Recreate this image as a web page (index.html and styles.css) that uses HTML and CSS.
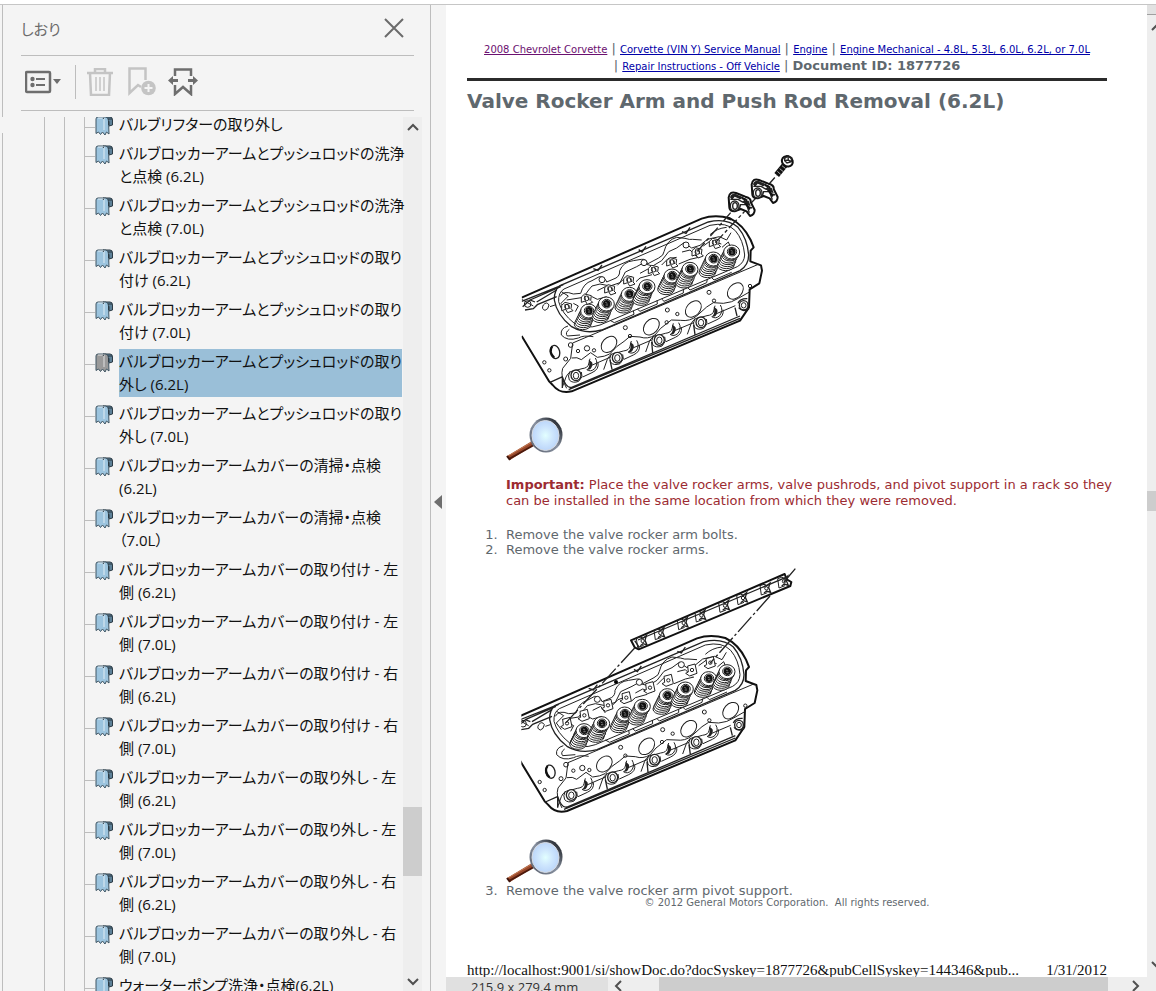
FILE: index.html
```
<!DOCTYPE html>
<html lang="ja">
<head>
    <meta charset="UTF-8">
    <meta name="viewport" content="width=device-width, initial-scale=1.0">
    <title>Valve Rocker Arm and Push Rod Removal (6.2L)</title>
    <link rel="stylesheet" href="styles.css">
</head>
<body>
    <svg class="sprite" aria-hidden="true">
        <defs>
            <radialGradient id="lens-fill">
                <stop offset="0" stop-color="#e2ffff"/>
                <stop offset="0.5" stop-color="#cfe7fd"/>
                <stop offset="1" stop-color="#bcd6fa"/>
            </radialGradient>
            <linearGradient id="ring-fill" x1="0" y1="1" x2="1" y2="0">
                <stop offset="0" stop-color="#555b68"/>
                <stop offset="0.5" stop-color="#8a93a3"/>
                <stop offset="1" stop-color="#05070a"/>
            </linearGradient>
            <clipPath id="head-clip"><rect x="35" y="0" width="865" height="780"/></clipPath>
            <clipPath id="head-clip-shifted"><rect x="48" y="0" width="865" height="790"/></clipPath>
        </defs>

        <symbol id="bookmark" viewBox="0 0 18 20">
            <path d="M8 1 H15 Q17.500 1 17.500 4 V9 L14 10 V6 L13 3 Z" class="bm-back"/>
            <path d="M1 3 Q1 1 3 1 H11 Q13.500 2 13.500 5 L14 18 L11.500 16 L10 19 L7.500 16 L5.500 18.500 L3.500 16 L1 17.500 Z" class="bm-front"/>
            <path d="M9 3 V14 M3 2 H10" class="bm-shine"/>
            <path d="M9 1.500 L8 3 M13.500 5 V9 M13 3 H17" class="bm-line"/>
        </symbol>

        <symbol id="magnifier" viewBox="0 0 58 45">
            <path d="M1 40 L26 25 L28 29 L4 44 Z" fill="#98482b"/>
            <path d="M3 43 L28 29" stroke="#4d1a0c" stroke-width="2"/>
            <path d="M2 40 L26 26" stroke="#c47b55" stroke-width="1"/>
            <path d="M1 40 L4 44" stroke="#3f140a" stroke-width="2"/>
            <ellipse cx="40" cy="19" rx="16.500" ry="17.500" fill="url(#ring-fill)"/>
            <ellipse cx="39.500" cy="19.500" rx="13.500" ry="15" fill="url(#lens-fill)" stroke="#d7dce3" stroke-width="1"/>
        </symbol>

        <symbol id="spring" viewBox="-50 -30 80 100" overflow="visible">
            <g class="coil">
                <ellipse cx="-18" cy="40" rx="25" ry="16"/>
                <ellipse cx="-16" cy="34" rx="25" ry="16"/>
                <ellipse cx="-13" cy="28" rx="25" ry="16"/>
                <ellipse cx="-11" cy="22" rx="24" ry="16"/>
                <ellipse cx="-8" cy="16" rx="24" ry="17"/>
                <ellipse cx="-5" cy="10" rx="24" ry="17"/>
                <ellipse cx="-2" cy="5" rx="24" ry="19"/>
                <ellipse cx="0" cy="0" rx="24" ry="21"/>
                <ellipse cx="1" cy="-1" rx="14" ry="13"/>
            </g>
            <ellipse cx="1" cy="-1" rx="11" ry="11" fill="#111"/>
            <path d="M-3 -5 L3 -2 M-2 3 L5 3" stroke="#aaa" stroke-width="2"/>
        </symbol>

        <symbol id="port" viewBox="-50 -50 120 100" overflow="visible">
            <path class="thin" d="M-41 36 L-30 5 Q-22 -14 0 -15 L18 -20 Q36 -22 38 -34 L42 -50"/>
            <path class="thin" d="M-18 -12 Q-26 3 -20 14 Q-10 25 8 18 L18 4 L16 -10 M20 5 L48 -8 Q70 -18 66 -38"/>
            <path class="dark" d="M38 -46 Q54 -40 48 -27 Q44 -14 32 -17 Q44 -25 38 -46 Z"/>
            <path class="thin" d="M32 -17 Q44 -9 56 -20 Q68 -36 58 -52"/>
            <ellipse class="mid solid" cx="0" cy="0" rx="15" ry="16"/>
            <ellipse class="thin solid" cx="0" cy="1" rx="8" ry="10"/>
        </symbol>

        <symbol id="head" viewBox="0 0 900 780" overflow="visible">
            <path class="outline" d="M35 473 L575 236 Q615 222 660 235 Q700 254 722 300 L731 322 L722 332 L721 364 L753 376 L756 392 L748 430 L719 448 L717 502 L690 542 L185 754 Q150 763 128 735 L118 725 L35 588"/>
            <path class="mid" d="M35 484 L160 434 M60 480 L152 440 M80 486 L140 450 M38 500 L60 480 L75 486 M45 510 L70 506 L82 494 L140 470 M250 386 L264 391 L276 375 M386 329 L396 336 L408 319 M516 275 L528 280 L540 262"/>
            <path class="thin" d="M35 478 L70 498 M100 495 q10 -12 17 0 q-2 14 -12 16 q-12 -4 -5 -16 M120 500 L135 495"/>
            <circle class="thin" cx="53" cy="492" r="10"/>
            <!-- valve cover rail -->
            <path class="mid" d="M150 437 L595 246 Q650 233 684 262 Q712 295 716 345 Q716 375 690 392 L275 570 Q225 584 185 560 Q140 525 133 480 Q132 450 150 437 Z"/>
            <path class="thin" d="M162 447 L600 256 Q650 245 676 272 Q700 300 704 345 Q703 368 682 380 L270 555 Q225 570 193 550 Q155 520 146 485 Q144 458 162 447 Z"/>
            <path class="thin" d="M300 541 L313 548 L372 523 L370 512 M382 507 L390 514 L442 492 L441 481 M455 477 L462 484 L520 459 L520 448 M533 443 L540 450 L590 428 L592 417 M605 413 L612 420 L665 397"/>
            <path class="thin" d="M174 558 Q150 565 154 585 Q172 605 205 594 Q220 585 250 590 M178 568 Q164 578 172 588 L210 585 M188 609 L745 373 M188 609 L182 655 L158 685 Q150 710 170 745"/>
            <path class="thin" d="M185 654 Q202 650 214 659 L242 638 L262 652 Q285 650 299 642 L320 620 Q344 604 360 589 L390 591 Q413 599 435 585 L452 565 L484 540 L512 541 Q540 545 560 528 L590 501 L610 488 L640 490 Q666 488 685 475 L720 455"/>
            <path class="mid" d="M120 727 L158 710 M157 710 Q169 747 185 742 L690 528 M176 749 L690 535 M300 660 L306 688 M425 606 L428 638 M551 555 L555 584 M675 503 L681 528 M157 710 V744"/>
            <path class="thin" d="M240 678 L300 652 M366 625 L425 600 M491 573 L551 548 M617 522 L676 497"/>
            <g class="thin">
                <ellipse cx="297" cy="613" rx="20" ry="27" transform="rotate(42 297 613)"/>
                <ellipse cx="424" cy="560" rx="20" ry="28" transform="rotate(42 424 560)"/>
                <ellipse cx="550" cy="507" rx="20" ry="28" transform="rotate(42 550 507)"/>
                <ellipse cx="676" cy="453" rx="20" ry="28" transform="rotate(42 676 453)"/>
                <circle cx="182" cy="615" r="7"/>
                <circle cx="167" cy="657" r="6"/>
                <circle cx="103" cy="667" r="5"/>
                <circle cx="118" cy="691" r="5"/>
                <circle cx="204" cy="633" r="5"/>
                <circle cx="231" cy="625" r="8"/>
                <circle cx="252" cy="631" r="5"/>
                <circle cx="346" cy="563" r="6"/>
                <circle cx="360" cy="588" r="5"/>
                <circle cx="472" cy="510" r="6"/>
                <circle cx="470" cy="547" r="5"/>
                <circle cx="502" cy="522" r="5"/>
                <circle cx="597" cy="457" r="6"/>
                <circle cx="612" cy="482" r="5"/>
                <circle cx="720" cy="438" r="5"/>
            </g>
            <ellipse class="mid" cx="135" cy="636" rx="14" ry="20" transform="rotate(-15 135 636)"/>
            <path class="outline" d="M127 619 Q115 635 133 653"/>
            <use href="#port" x="148" y="656" width="120" height="100"/>
            <use href="#port" x="272" y="603" width="120" height="100"/>
            <use href="#port" x="398" y="550" width="120" height="100"/>
            <use href="#port" x="523" y="497" width="120" height="100"/>
            <path class="mid" d="M684 490 Q690 475 712 476 M686 503 Q698 518 717 506"/>
            <ellipse class="mid" cx="701" cy="496" rx="13" ry="14"/>
            <ellipse class="thin" cx="701" cy="496" rx="7" ry="8"/>
            <!-- intake side casting -->
            <path class="thin" d="M150 470 Q160 450 190 462 L212 460 Q220 430 246 422 L268 410 Q285 410 290 426 L318 414 Q330 407 329 392 Q340 365 370 362 L394 358 Q410 356 412 372 L446 354 Q462 346 462 335 Q470 300 500 292 L525 295 Q540 300 548 298 L575 300"/>
            <path class="thin" d="M170 480 L220 472 L236 450 L246 438 L270 432 L300 438 L330 428 L346 396 L380 380 L398 370 L428 378 L455 362 L476 335 L500 324 L522 308 L545 324 L570 316 L592 298 L628 290 L650 300 L663 278 M600 284 Q620 265 650 262"/>
            <path class="thin" d="M154 455 L175 468 L153 490 L168 510 M262 452 L286 440 L300 460 M322 436 L338 420 L366 410 M390 400 L412 388 L440 398 M455 375 L474 356 L500 352 M516 336 L540 330 L560 350 M580 318 L602 302 L634 312 M190 490 L205 498 L196 515 M246 470 L262 478 L290 470 M378 425 L390 414 L426 404 M506 372 L540 358 L566 352 M636 322 L655 306 L660 318"/>
            <g class="thin solid">
                <circle cx="276" cy="419" r="9"/>
                <circle cx="402" cy="368" r="9"/>
                <circle cx="528" cy="315" r="9"/>
            </g>
            <use href="#spring" x="186" y="483" width="80" height="100"/>
            <use href="#spring" x="239" y="462" width="80" height="100"/>
            <use href="#spring" x="308" y="433" width="80" height="100"/>
            <use href="#spring" x="361" y="410" width="80" height="100"/>
            <use href="#spring" x="436" y="378" width="80" height="100"/>
            <use href="#spring" x="490" y="358" width="80" height="100"/>
            <use href="#spring" x="560" y="327" width="80" height="100"/>
            <use href="#spring" x="615" y="306" width="80" height="100"/>
        </symbol>

        <symbol id="pedestal" viewBox="-20 -20 40 40" overflow="visible">
            <path class="thin solid" d="M-16 -4 L-6 -13 L14 -8 L12 6 L18 12 L2 18 L-4 8 L-16 12 Z"/>
            <circle class="thin" cx="0" cy="0" r="7"/>
            <path class="thin" d="M-6 -8 L-4 5 M3 -5 L8 6"/>
        </symbol>

        <symbol id="clamp" viewBox="-20 -20 40 40" overflow="visible">
            <path class="thin" d="M-18 -8 L-14 20 M-18 -8 L-6 -12 M-14 20 L4 13"/>
            <path class="mid" d="M-6 -12 L2 -8 L12 -16 L8 -2 L14 12 L2 8 L-6 14"/>
            <circle class="thin" cx="1" cy="0" r="5"/>
        </symbol>

        <symbol id="pad" viewBox="-20 -20 40 40" overflow="visible">
            <path class="thin solid" d="M-12 -14 L10 -20 L16 8 L-6 16 L-18 8 L-10 4 Z"/>
            <circle class="thin" cx="1" cy="-2" r="5"/>
        </symbol>

        <symbol id="rocker" viewBox="-40 -40 80 80" overflow="visible">
            <path class="outline solid" d="M-36 -18 Q-32 -38 -14 -31 L14 -20 Q32 -16 30 -4 L42 20 Q42 34 28 38 L18 24 L0 17 L-18 24 Q-34 24 -34 12 Z"/>
            <path class="dark" d="M-32 -18 Q-28 -32 -14 -27 L4 -20 L-2 -13 L-18 -20 L-26 -10 Z M4 -6 L24 -8 L30 8 L16 6 Z"/>
            <path class="mid" d="M-29 -20 Q-20 -30 -10 -22 L16 -12 M-31 -12 L-8 -12 L6 -4 L24 0 M-4 17 L0 4 L18 4 L26 28 M-12 -24 L-2 -14 L8 -20 M10 -10 L22 10 L34 14"/>
            <ellipse class="mid solid" cx="-18" cy="8" rx="13" ry="15"/>
            <ellipse class="mid" cx="-17" cy="8" rx="7" ry="10"/>
            <path class="outline" d="M4 -16 L20 -8 M14 0 L28 18"/>
        </symbol>
    </svg>

    <main class="window">
        <div class="rail"><div class="rail-top"></div><div class="rail-bottom"></div></div>

        <aside class="sidebar">
            <div class="sidebar-header">
                <h2>しおり</h2>
                <button type="button" class="icon-btn" aria-label="閉じる">
                    <svg width="20" height="20" viewBox="0 0 20 20"><path d="M1 1 L19 19 M19 1 L1 19" stroke="#6b6b6b" stroke-width="2" fill="none"/></svg>
                </button>
            </div>
            <div class="toolbar">
                <button type="button" class="icon-btn btn-options" aria-label="オプション">
                    <svg width="38" height="24" viewBox="0 0 38 24">
                        <rect x="1" y="2" width="24" height="20" rx="1" fill="none" stroke="#6e6e6e" stroke-width="2.500"/>
                        <circle cx="7.500" cy="9" r="2.200" fill="#6e6e6e"/><circle cx="7.500" cy="15" r="2.200" fill="#6e6e6e"/>
                        <path d="M11 9 H20 M11 15 H20" stroke="#6e6e6e" stroke-width="2"/>
                        <path d="M28 9 H36 L32 14 Z" fill="#6e6e6e"/>
                    </svg>
                </button>
                <span class="divider"></span>
                <button type="button" class="icon-btn btn-delete" aria-label="削除" disabled>
                    <svg width="26" height="28" viewBox="0 0 26 28" fill="none" stroke="#c4c4c4" stroke-width="2.500">
                        <path d="M0 5 H26 M8 5 V1 H18 V5 M3 5 L4 27 H22 L23 5"/>
                        <path d="M9 9 V23 M13 9 V23 M17 9 V23" stroke-width="1.500"/>
                    </svg>
                </button>
                <button type="button" class="icon-btn btn-add" aria-label="新規しおり" disabled>
                    <svg width="28" height="29" viewBox="0 0 28 29">
                        <path d="M13 20 L10 18 L1.500 26 V1.500 H17.500 V13" fill="none" stroke="#c4c4c4" stroke-width="2.500"/>
                        <circle cx="20.500" cy="21" r="7.300" fill="#c4c4c4"/>
                        <path d="M16.500 21 H24.500 M20.500 17 V25" stroke="#f4f4f4" stroke-width="2"/>
                    </svg>
                </button>
                <button type="button" class="icon-btn" aria-label="現在のしおりを表示">
                    <svg width="30" height="28" viewBox="0 0 30 28" fill="none" stroke="#6e6e6e" stroke-width="2.500">
                        <path d="M7 8 V1.500 H23 V8 M7 17 V26 L15 19 L23 26 V17"/>
                        <path d="M4 12.500 H10 M20 12.500 H26" stroke-width="3"/>
                        <path d="M0 12.500 L5 8 V17 Z M30 12.500 L25 8 V17 Z" fill="#6e6e6e" stroke="none"/>
                    </svg>
                </button>
            </div>

            <div class="tree-wrap">
                <nav class="tree">
                    <ul>
                        <li><svg class="bm"><use href="#bookmark"/></svg><a href="#">バルブリフターの取り外し</a></li>
                        <li><svg class="bm"><use href="#bookmark"/></svg><a href="#">バルブロッカーアームとプッシュロッドの洗浄<br>と点検 (6.2L)</a></li>
                        <li><svg class="bm"><use href="#bookmark"/></svg><a href="#">バルブロッカーアームとプッシュロッドの洗浄<br>と点検 (7.0L)</a></li>
                        <li><svg class="bm"><use href="#bookmark"/></svg><a href="#">バルブロッカーアームとプッシュロッドの取り<br>付け (6.2L)</a></li>
                        <li><svg class="bm"><use href="#bookmark"/></svg><a href="#">バルブロッカーアームとプッシュロッドの取り<br>付け (7.0L)</a></li>
                        <li class="selected"><svg class="bm"><use href="#bookmark"/></svg><a href="#" aria-current="true">バルブロッカーアームとプッシュロッドの取り<br>外し (6.2L)</a></li>
                        <li><svg class="bm"><use href="#bookmark"/></svg><a href="#">バルブロッカーアームとプッシュロッドの取り<br>外し (7.0L)</a></li>
                        <li><svg class="bm"><use href="#bookmark"/></svg><a href="#">バルブロッカーアームカバーの清掃・点検<br>(6.2L)</a></li>
                        <li><svg class="bm"><use href="#bookmark"/></svg><a href="#">バルブロッカーアームカバーの清掃・点検<br>（7.0L）</a></li>
                        <li><svg class="bm"><use href="#bookmark"/></svg><a href="#">バルブロッカーアームカバーの取り付け - 左<br>側 (6.2L)</a></li>
                        <li><svg class="bm"><use href="#bookmark"/></svg><a href="#">バルブロッカーアームカバーの取り付け - 左<br>側 (7.0L)</a></li>
                        <li><svg class="bm"><use href="#bookmark"/></svg><a href="#">バルブロッカーアームカバーの取り付け - 右<br>側 (6.2L)</a></li>
                        <li><svg class="bm"><use href="#bookmark"/></svg><a href="#">バルブロッカーアームカバーの取り付け - 右<br>側 (7.0L)</a></li>
                        <li><svg class="bm"><use href="#bookmark"/></svg><a href="#">バルブロッカーアームカバーの取り外し - 左<br>側 (6.2L)</a></li>
                        <li><svg class="bm"><use href="#bookmark"/></svg><a href="#">バルブロッカーアームカバーの取り外し - 左<br>側 (7.0L)</a></li>
                        <li><svg class="bm"><use href="#bookmark"/></svg><a href="#">バルブロッカーアームカバーの取り外し - 右<br>側 (6.2L)</a></li>
                        <li><svg class="bm"><use href="#bookmark"/></svg><a href="#">バルブロッカーアームカバーの取り外し - 右<br>側 (7.0L)</a></li>
                        <li><svg class="bm"><use href="#bookmark"/></svg><a href="#">ウォーターポンプ洗浄・点検(6.2L)</a></li>
                    </ul>
                </nav>
                <div class="scrollbar">
                    <svg width="12" height="8" viewBox="0 0 12 8"><path d="M1 7 L6 2 L11 7" class="chevron"/></svg>
                    <div class="track"><div class="thumb"></div></div>
                    <svg width="12" height="8" viewBox="0 0 12 8"><path d="M1 1 L6 6 L11 1" class="chevron"/></svg>
                </div>
            </div>
        </aside>

        <button type="button" class="splitter" aria-label="パネルを閉じる">
            <svg width="8" height="14" viewBox="0 0 8 14"><path d="M8 0 V14 L0 7 Z" fill="#6e6e6e"/></svg>
        </button>

        <section class="viewer" lang="en">
            <div class="viewer-body">
                <article class="page">
                    <header class="page-header">
                        <a href="#" class="visited">2008 Chevrolet Corvette</a> | <a href="#">Corvette (VIN Y) Service Manual</a> | <a href="#">Engine</a> | <a href="#">Engine Mechanical - 4.8L, 5.3L, 6.0L, 6.2L, or 7.0L</a><br>
                        | <a href="#">Repair Instructions - Off Vehicle</a> | <strong>Document ID: 1877726</strong>
                    </header>
                    <h1>Valve Rocker Arm and Push Rod Removal (6.2L)</h1>

                    <div class="figure figure-first">
                        <svg class="drawing" viewBox="-12 0 912 780" role="img" aria-label="Rocker arms and bolt">
                            <g clip-path="url(#head-clip)">
                                <use href="#head" width="900" height="780"/>
                            </g>
                            <use href="#pedestal" x="151" y="480" width="40" height="40"/>
                            <use href="#pedestal" x="210" y="455" width="40" height="40"/>
                            <use href="#pedestal" x="280" y="427" width="40" height="40"/>
                            <use href="#pedestal" x="337" y="400" width="40" height="40"/>
                            <use href="#pedestal" x="411" y="369" width="40" height="40"/>
                            <use href="#pedestal" x="466" y="346" width="40" height="40"/>
                            <use href="#pedestal" x="542" y="316" width="40" height="40"/>
                            <use href="#pedestal" x="594" y="288" width="40" height="40"/>
                            <path class="dash" d="M562 334 L662 218 M616 308 L704 214 M724 188 L740 172 M772 138 L800 106"/>
                            <path class="outline" d="M652 235 L664 239"/>
                            <use href="#rocker" x="652" y="150" width="80" height="80"/>
                            <use href="#rocker" x="721" y="111" width="80" height="80"/>
                            <path d="M827 72 L800 105" stroke="#111" stroke-width="18"/>
                            <path d="M816 77 L827 86 M809 86 L820 95 M802 94 L812 103" stroke="#fff" stroke-width="2"/>
                            <ellipse class="outline solid" cx="832" cy="64" rx="17" ry="15" transform="rotate(35 832 64)"/>
                            <path class="mid" d="M824 55 L834 48 L845 53 L844 65 L831 69 L824 62 Z M834 48 L835 60 L844 65 M835 60 L824 62"/>
                        </svg>
                        <svg class="zoom-icon"><use href="#magnifier"/></svg>
                    </div>

                    <p class="important"><strong>Important:</strong> Place the valve rocker arms, valve pushrods, and pivot support in a rack so they can be installed in the same location from which they were removed.</p>

                    <ol>
                        <li>Remove the valve rocker arm bolts.</li>
                        <li>Remove the valve rocker arms.
                            <div class="figure">
                                <svg class="drawing" viewBox="-12 0 912 780" role="img" aria-label="Rocker arm pivot support">
                                    <g transform="translate(-14 -1)">
                                        <g clip-path="url(#head-clip-shifted)">
                                            <use href="#head" width="900" height="780"/>
                                        </g>
                                    </g>
                                    <use href="#pad" x="150" y="472" width="40" height="40"/>
                                    <use href="#pad" x="202" y="448" width="40" height="40"/>
                                    <use href="#pad" x="273" y="418" width="40" height="40"/>
                                    <use href="#pad" x="328" y="395" width="40" height="40"/>
                                    <use href="#pad" x="399" y="365" width="40" height="40"/>
                                    <use href="#pad" x="454" y="343" width="40" height="40"/>
                                    <use href="#pad" x="525" y="312" width="40" height="40"/>
                                    <use href="#pad" x="580" y="290" width="40" height="40"/>
                                    <circle cx="318" cy="366" r="6"/>
                                    <path class="outline solid" d="M363 241 L824 42 L830 58 L844 66 L841 78 L386 268 L374 262 Z"/>
                                    <path class="mid" d="M384 240 L828 52 M374 242 L388 262"/>
                                    <use href="#clamp" x="377" y="223" width="40" height="40"/>
                                    <use href="#clamp" x="430" y="199" width="40" height="40"/>
                                    <use href="#clamp" x="500" y="169" width="40" height="40"/>
                                    <use href="#clamp" x="553" y="146" width="40" height="40"/>
                                    <use href="#clamp" x="624" y="117" width="40" height="40"/>
                                    <use href="#clamp" x="678" y="94" width="40" height="40"/>
                                    <use href="#clamp" x="748" y="65" width="40" height="40"/>
                                    <use href="#clamp" x="801" y="44" width="40" height="40"/>
                                    <path class="dash long" d="M374 264 L168 488 M780 108 L600 310 M822 66 L856 26"/>
                                </svg>
                                <svg class="zoom-icon"><use href="#magnifier"/></svg>
                            </div>
                        </li>
                        <li>Remove the valve rocker arm pivot support.</li>
                    </ol>
                    <p class="copyright">© 2012 General Motors Corporation.&nbsp; All rights reserved.</p>

                    <footer class="page-footer">
                        <span>http://localhost:9001/si/showDoc.do?docSyskey=1877726&amp;pubCellSyskey=144346&amp;pub...</span>
                        <span>1/31/2012</span>
                    </footer>
                </article>
                <div class="page-scroll">
                    <div class="split-box"></div>
                    <svg width="14" height="8" viewBox="0 0 14 8"><path d="M2 7 L7 2 L12 7" class="chevron"/></svg>
                    <div class="track"><div class="thumb"></div></div>
                    <svg width="14" height="8" viewBox="0 0 14 8"><path d="M2 1 L7 6 L12 1" class="chevron"/></svg>
                </div>
            </div>
            <div class="status-bar">
                <span class="page-size">215.9 x 279.4 mm</span>
                <svg width="8" height="12" viewBox="0 0 8 12"><path d="M7 1 L2 6 L7 11" class="chevron"/></svg>
                <div class="h-track"><div class="h-thumb"></div></div>
                <svg width="8" height="12" viewBox="0 0 8 12"><path d="M1 1 L6 6 L1 11" class="chevron"/></svg>
            </div>
        </section>
    </main>
</body>
</html>
```
FILE: styles.css
```
:root {
    --panel-bg: #f4f4f4;
    --line-color: #bdbdbd;
    --thumb-color: #cdcdcd;
    --track-color: #eeeeee;
    --text-gray: #5f686e;
    --selected-bg: #9abfd8;
}
* {
    box-sizing: border-box;
}
body {
    margin: 0;
    padding-top: 4px;
    height: 100vh;
    overflow: hidden;
    background-color: #fff;
    font-family: "Open Sans", "Noto Sans CJK JP", sans-serif;
}
h1, h2, p, ul, ol {
    margin: 0;
    padding: 0;
}
.sprite {
    position: absolute;
    width: 0;
    height: 0;
}
.window {
    display: flex;
    height: 100%;
    border-top: 1px solid #c6c6c6;
    background-color: var(--panel-bg);
}

/* left edge */
.rail {
    display: flex;
    flex-direction: column;
    gap: 16px;
    width: 3px;
}
.rail-top {
    height: 112px;
}
.rail-bottom {
    flex: 1;
}
.rail-top, .rail-bottom {
    border-right: 1px solid var(--line-color);
}

/* bookmarks panel */
.sidebar {
    display: flex;
    flex-direction: column;
    width: 427px;
}
.sidebar-header {
    display: flex;
    justify-content: space-between;
    align-items: center;
    height: 51px;
    margin: 0 16px 0 18px;
    padding: 0 10px 4px 0;
    border-bottom: 1px solid var(--line-color);
}
.sidebar-header h2 {
    font-size: 15px;
    font-weight: 400;
    color: #6b6b6b;
    font-feature-settings: "palt";
}
.icon-btn {
    display: block;
    padding: 0;
    border: none;
    background: none;
    cursor: pointer;
}
.icon-btn svg {
    display: block;
}
.toolbar {
    display: flex;
    align-items: center;
    height: 55px;
    margin: 0 16px 0 18px;
    padding: 0 0 3px 4px;
    border-bottom: 1px solid var(--line-color);
}
.divider {
    width: 1px;
    height: 34px;
    margin: 0 11px 0 12px;
    background-color: var(--line-color);
}
.btn-delete {
    margin-right: 15px;
}
.btn-add {
    margin-right: 12px;
}
.tree-wrap {
    display: flex;
    flex: 1;
    min-height: 0;
    margin-top: 6px;
}
/* clipped only vertically, so a long label is never cut at the scrollbar */
.tree {
    z-index: 1;
    width: 400px;
    overflow-x: visible;
    overflow-y: clip;
    padding: 0 1px 0 41px;
    background: linear-gradient(var(--line-color), var(--line-color)) 61px 0 / 1px 100% no-repeat;
}
.tree ul {
    list-style: none;
    margin-top: -5px;
    padding-left: 39px;
    border-left: 1px solid var(--line-color);
}
.tree li {
    display: flex;
    align-items: flex-start;
    padding-bottom: 4px;
    border-left: 1px solid var(--line-color);
}
.tree li::before {
    content: "";
    flex: none;
    width: 10px;
    height: 1px;
    margin-top: 15px;
    background-color: var(--line-color);
}
.bm {
    flex: none;
    width: 18px;
    height: 20px;
    margin: 4px 6px 0 0;
    color: #9cc4de;
}
.tree a {
    flex: 1;
    padding: 1px 0;
    font-size: 15px;
    line-height: 23px;
    white-space: nowrap;
    color: #111;
    text-decoration: none;
    font-feature-settings: "palt";
}
.selected .bm {
    color: #9a9a9a;
}
.selected a {
    background-color: var(--selected-bg);
}
.bm-front {
    fill: currentColor;
    stroke: #3f5563;
    stroke-width: 1;
}
.bm-back {
    fill: #5d8198;
    stroke: #2c3b45;
    stroke-width: 1;
}
.selected .bm-back {
    fill: #777;
}
.bm-shine {
    fill: none;
    stroke: #fff;
    stroke-opacity: 0.35;
    stroke-width: 2;
}
.bm-line {
    fill: none;
    stroke: #2c3b45;
    stroke-width: 1;
}
.scrollbar {
    display: flex;
    flex-direction: column;
    align-items: center;
    width: 19px;
    padding: 6px 0 5px;
    background-color: var(--track-color);
}
.scrollbar .track {
    flex: 1;
    width: 100%;
    padding-top: 676px;
}
.scrollbar .thumb {
    height: 69px;
    background-color: var(--thumb-color);
}
.chevron {
    fill: none;
    stroke: #505050;
    stroke-width: 2;
}
.splitter {
    display: flex;
    align-items: center;
    width: 16px;
    padding: 7px 0 0 3px;
    border: none;
    border-left: 1px solid var(--line-color);
    background-color: var(--panel-bg);
    cursor: pointer;
}

/* document */
.viewer {
    display: flex;
    flex-direction: column;
    flex: 1;
    min-width: 0;
}
.viewer-body {
    display: flex;
    flex: 1;
    min-height: 0;
}
.page {
    flex: 1;
    overflow: hidden;
    padding: 36px 40px 0 21px;
    background-color: #fff;
    color: var(--text-gray);
    font-family: "DejaVu Sans", sans-serif;
    font-size: 13px;
    line-height: 15px;
}
.page-header {
    padding-bottom: 3px;
    border-bottom: 3px solid #2b2b2b;
    line-height: 16px;
    text-align: center;
    white-space: nowrap;
}
.page-header a {
    font-size: 10px;
    color: #0000a8;
}
.page-header a.visited {
    color: #6b1070;
}
h1 {
    margin-top: 7px;
    font-size: 20px;
    line-height: 26px;
    white-space: nowrap;
}
.figure-first {
    margin: 26px 0 0 39px;
}
.drawing {
    display: block;
    width: 304px;
    height: 260px;
}
.zoom-icon {
    display: block;
    width: 58px;
    height: 45px;
    margin-top: 16px;
}
.outline {
    fill: none;
    stroke: #111;
    stroke-width: 6;
    stroke-linejoin: round;
}
.mid {
    fill: none;
    stroke: #222;
    stroke-width: 4;
}
.thin, .coil ellipse {
    fill: none;
    stroke: #222;
    stroke-width: 3;
}
.coil ellipse {
    fill: #fff;
}
.solid {
    fill: #fff;
}
.dark {
    fill: #222;
}
.dash {
    fill: none;
    stroke: #222;
    stroke-width: 4;
    stroke-dasharray: 34 8 10 8;
}
.dash.long {
    stroke-dasharray: 60 8 8 8;
}
.important {
    margin: 16px -8px 0 39px;
    line-height: 16px;
    color: #9c2b31;
}
ol {
    margin-top: 18px;
    padding-left: 39px;
}
li::marker {
    content: counter(list-item) ".\00a0\00a0";
}
ol .figure {
    padding-top: 3px;
}
ol .zoom-icon {
    margin-top: 18px;
}
.copyright {
    font-size: 10px;
    line-height: 10px;
    text-align: center;
}
.page-footer {
    display: flex;
    justify-content: space-between;
    margin-top: 54px;
    font-family: "Liberation Serif", serif;
    font-size: 15px;
    line-height: 16px;
    white-space: nowrap;
    color: #111;
}
.page-scroll {
    display: flex;
    flex-direction: column;
    width: 9px;
    overflow: hidden;
    background-color: var(--track-color);
}
.page-scroll svg {
    flex: none;
    margin-left: 3px;
}
.split-box {
    height: 10px;
    margin-bottom: 8px;
    background-color: #e2e2e2;
    border-bottom: 1px solid #a0a0a0;
}
.page-scroll .track {
    flex: 1;
    padding-top: 460px;
}
.page-scroll .thumb {
    height: 20px;
    background-color: var(--thumb-color);
}
.page-scroll svg:last-child {
    margin-bottom: 8px;
}
.status-bar {
    display: flex;
    align-items: center;
    height: 14px;
    padding-right: 16px;
    background-color: var(--track-color);
    overflow: hidden;
}
.page-size {
    align-self: flex-start;
    width: 162px;
    margin-right: 6px;
    padding-left: 25px;
    background-color: #e0e0e0;
    font-size: 13px;
    line-height: 20px;
    white-space: nowrap;
    color: #333;
}
.status-bar svg {
    flex: none;
    margin-top: 4px;
}
.h-track {
    flex: 1;
    margin: 0 24px 0 37px;
}
.h-thumb {
    height: 14px;
    background-color: var(--thumb-color);
}
```
